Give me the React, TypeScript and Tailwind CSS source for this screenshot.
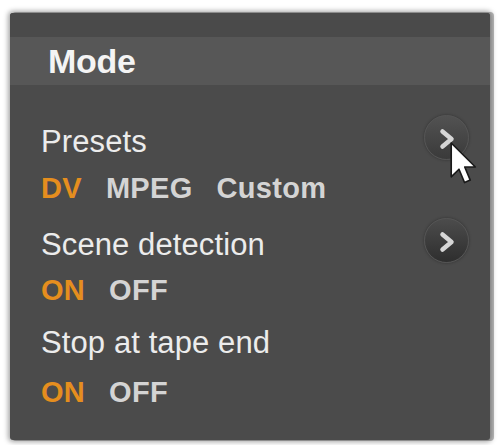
import React from "react";

const Chevron = () => (
  <svg width="45" height="45" viewBox="0 0 45 45" className="absolute inset-0">
    <polyline
      points="17.5,20.5 26.5,28 17.5,35.5"
      fill="none"
      stroke="#d6d6d6"
      strokeWidth="4.5"
      strokeLinecap="round"
      strokeLinejoin="round"
      transform="translate(0,-5)"
    />
  </svg>
);

const RoundButton = ({ hover }: { hover?: boolean }) => (
  <div
    className={
      "relative w-[45px] h-[45px] rounded-full mb-[9px] border border-[#555555] shadow-[0_0_3px_rgba(0,0,0,0.35)] " +
      (hover
        ? "bg-[linear-gradient(to_bottom,#525252,#3a3a3a)]"
        : "bg-[linear-gradient(to_bottom,#4c4c4c,#2e2e2e)]")
    }
  >
    <Chevron />
  </div>
);

const Label = ({ text, button, hover }: { text: string; button?: boolean; hover?: boolean }) => (
  <div className="flex items-center justify-between h-[36px] pr-[21px]">
    <span className="text-[31px] leading-[36px] text-[#ececec] tracking-[0.1px]">{text}</span>
    {button && <RoundButton hover={hover} />}
  </div>
);

const Options = ({ items, active }: { items: string[]; active: number }) => (
  <div className="flex gap-[24px] h-[36px] items-center">
    {items.map((t, i) => (
      <span
        key={t}
        className={
          "text-[29px] leading-[36px] font-bold tracking-[0.3px] " +
          (i === active ? "text-[#e58e1e]" : "text-[#d4d4d4]")
        }
      >
        {t}
      </span>
    ))}
  </div>
);

export default function App() {
  return (
    <div className="w-[498px] h-[445px] bg-white pt-[13px] pl-[10px] overflow-hidden">
      <div
        className="relative w-[480px] h-[427px] bg-[#4b4b4b] rounded-[3px] shadow-[0_0_5px_2px_rgba(0,0,0,0.35),3px_0_0_1px_#bdbdbd] flex flex-col"
        style={{ fontFamily: '"Liberation Sans", Arial, sans-serif' }}
      >
        <div className="h-[24px] bg-[#4a4a4a] rounded-t-[3px]" />
        <div className="h-[48px] bg-[#575757] flex items-center pl-[38px]">
          <span className="text-[34px] font-bold text-[#f4f4f4] tracking-[-0.3px] leading-none">Mode</span>
        </div>
        <div className="flex flex-col pl-[31px]">
          <div className="mt-[39px]">
            <Label text="Presets" button hover />
          </div>
          <div className="mt-[10px]">
            <Options items={["DV", "MPEG", "Custom"]} active={0} />
          </div>
          <div className="mt-[21px]">
            <Label text="Scene detection" button />
          </div>
          <div className="mt-[9px]">
            <Options items={["ON", "OFF"]} active={0} />
          </div>
          <div className="mt-[17px]">
            <Label text="Stop at tape end" />
          </div>
          <div className="mt-[13px]">
            <Options items={["ON", "OFF"]} active={0} />
          </div>
        </div>
        <svg
          width="27"
          height="43"
          viewBox="0 0 13 21"
          className="absolute left-[440px] top-[129px]"
        >
          <path
            d="M0.5 0.5 L0.5 17 L4.3 13.3 L7 19.8 L9.8 18.6 L7.1 12.2 L12.3 12.2 Z"
            fill="#ffffff"
            stroke="#1a1a1a"
            strokeWidth="0.8"
            strokeLinejoin="round"
          />
        </svg>
      </div>
    </div>
  );
}
